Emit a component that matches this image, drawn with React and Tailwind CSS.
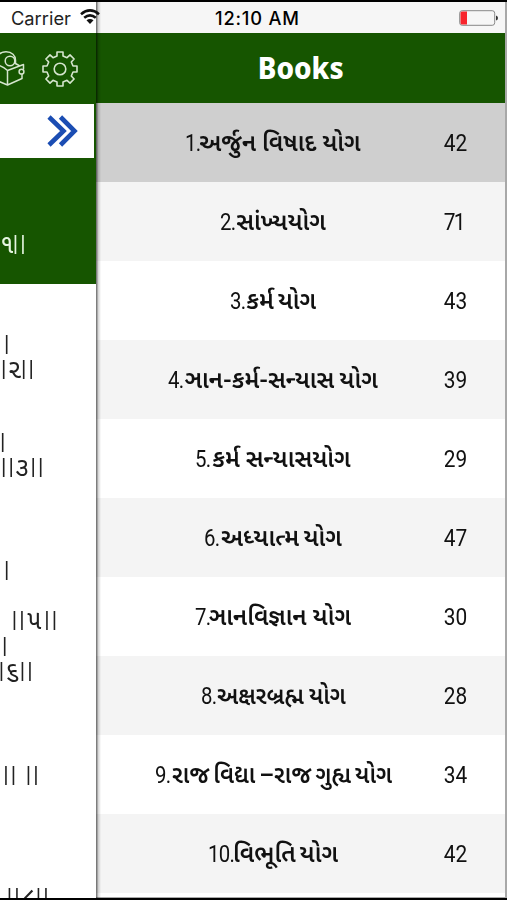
import React from 'react';

const books = [
    { no: '1', title: 'અર્જુન વિષાદ યોગ', verses: '42', bg: 'bg-[#cfcfcf]', noCls: 'w-[14px]', titleCls: '' },
    { no: '2', title: 'સાંખ્યયોગ', verses: '71', bg: 'bg-[#f4f4f4]', noCls: 'w-[16px]', titleCls: '' },
    { no: '3', title: 'કર્મ યોગ', verses: '43', bg: 'bg-white', noCls: 'w-[16.5px]', titleCls: '[word-spacing:-2px]' },
    { no: '4', title: 'ઞાન-કર્મ-સન્યાસ યોગ', verses: '39', bg: 'bg-[#f4f4f4]', noCls: 'w-[16.5px]', titleCls: '[word-spacing:-1px]' },
    { no: '5', title: 'કર્મ સન્યાસયોગ', verses: '29', bg: 'bg-white', noCls: 'w-[17px]', titleCls: '' },
    { no: '6', title: 'અધ્યાત્મ યોગ', verses: '47', bg: 'bg-[#f4f4f4]', noCls: 'w-[17px]', titleCls: '[word-spacing:-1.5px]' },
    { no: '7', title: 'ઞાનવિજ્ઞાન યોગ', verses: '30', bg: 'bg-white', noCls: 'w-[14px]', titleCls: '' },
    { no: '8', title: 'અક્ષરબ્રહ્મ યોગ', verses: '28', bg: 'bg-[#f4f4f4]', noCls: 'w-[16.5px]', titleCls: 'origin-left scale-x-[0.965] -mr-[5px] [word-spacing:-1px]' },
    { no: '9', title: 'રાજ વિદ્યા –રાજ ગુહ્ય યોગ', verses: '34', bg: 'bg-white', noCls: 'w-[16.5px]', titleCls: 'origin-left scale-x-[0.97] -mr-[8px] [word-spacing:-2px]' },
    { no: '10', title: 'વિભૂતિ યોગ', verses: '42', bg: 'bg-[#f4f4f4]', noCls: 'w-[25px]', titleCls: '[word-spacing:-2px]' },
];

function Bar() {
    return <span className="w-[7.5px] shrink-0 text-center">|</span>;
}

function Digit({ className, children }) {
    return <span className={`shrink-0 text-center text-[26px] ${className}`}>{children}</span>;
}

function Line({ className = '', children }) {
    return <p className={`flex h-[25.3px] items-center text-[22px] leading-none ${className}`}>{children}</p>;
}

function ReaderIcon() {
    return (
        <svg className="-ml-[11px] h-9 w-9 shrink-0" viewBox="0 0 36 36" fill="none" stroke="#d5e5cd" strokeWidth="1.5" strokeLinejoin="round" strokeLinecap="round">
            <path d="M8 13C6 5 11 .8 17 .8c6 0 9.500 3.700 9.500 8.500v3" />
            <circle cx="21" cy="10" r="4.800" />
            <path d="M18.500 19.500C14 15 9 13.500 3 13v14.500l15.500 6.500L33 27.500v-4M18.500 19.500V34M18.500 19.500L34.500 13.500v4.500M25.500 12l4.500 2.500" />
            <circle cx="32.500" cy="20.700" r="2.400" />
        </svg>
    );
}

function GearIcon() {
    return (
        <svg className="ml-[17px] h-9 w-9 shrink-0" viewBox="0 0 36 36" fill="none" stroke="#d5e5cd" strokeWidth="1.600" strokeLinejoin="round">
            <path d="M15 1h6v4l4 1.700 3-2.800 4.100 4.100-2.800 3 1.700 4h4v6h-4l-1.700 4 2.800 3-4.100 4.100-3-2.800-4 1.700v4h-6v-4l-4-1.700-3 2.800L3.900 28l2.800-3L5 21H1v-6h4l1.700-4L3.900 8 8 3.900l3 2.800L15 5z" />
            <circle cx="18" cy="18" r="5.800" />
        </svg>
    );
}

function Reader() {
    return (
        <div className="flex h-full w-24 shrink-0 flex-col overflow-hidden bg-white font-['Roboto','Noto_Sans_Gujarati',sans-serif] text-[#222]">
            <div className="flex h-[31px] shrink-0 items-center pl-[11px] pt-0.5">
                <span className="font-['Inter',sans-serif] text-[18.3px] leading-none text-[#222]">Carrier</span>
            </div>
            <div className="flex h-[71px] shrink-0 items-center bg-[#165500]">
                <ReaderIcon />
                <GearIcon />
            </div>
            <div className="h-[54px] shrink-0 bg-[#165500] pr-0.5">
                <div className="flex h-full items-center justify-end bg-white pr-4">
                    <svg className="h-8 w-[31px]" viewBox="0 0 31 32" fill="none" stroke="#1b4db3" strokeWidth="4.600">
                        <path d="M2 2l14.500 14L2 30M13.500 2L27.500 16l-14 14" />
                    </svg>
                </div>
            </div>
            <div className="flex h-[126px] shrink-0 flex-col bg-[#165500] pt-[73px] text-[#e5f5e0]">
                <div className="will-change-transform">
                    <Line>
                        <Digit className="w-[11.75px]">૧</Digit><Bar /><Bar />
                    </Line>
                </div>
            </div>
            <div className="pt-[47.5px] will-change-transform">
                <Line className="pl-[3px]"><Bar /></Line>
                <Line><Bar /><Digit className="w-[12.5px]">૨</Digit><Bar /><Bar /></Line>
                <Line />
                <Line />
                <Line className="-ml-px -mt-[3.5px]"><Bar /></Line>
                <Line><Bar /><Bar /><Digit className="w-[14.5px]">૩</Digit><Bar /><Bar /></Line>
                <Line />
                <Line />
                <Line />
                <Line className="mt-[1.5px] pl-[3px]"><Bar /></Line>
                <Line />
                <Line className="pl-[10.75px]"><Bar /><Bar /><Digit className="w-[17.5px]">૫</Digit><Bar /><Bar /></Line>
                <Line className="pl-px"><Bar /></Line>
                <Line className="-ml-[2.25px]"><Bar /><Digit className="w-[13.5px]">૬</Digit><Bar /><Bar /></Line>
                <Line />
                <Line />
                <Line />
                <Line className="mt-[2.5px] pl-[2.25px]"><Bar /><Bar /><Digit className="w-[7.5px]"> </Digit><Bar /><Bar /></Line>
                <Line />
                <Line />
                <Line />
                <Line />
                <Line className="-mt-[4px] pl-[5.75px]"><Bar /><Bar /><Digit className="w-[14px]">૮</Digit><Bar /><Bar /></Line>
            </div>
        </div>
    );
}

function BookRow({ book }) {
    return (
        <div className={`flex h-[79px] shrink-0 items-center pl-1.5 ${book.bg}`}>
            <div className="flex w-[341px] items-baseline justify-center whitespace-nowrap pl-px text-[24px] leading-none">
                <span className={`shrink-0 ${book.noCls}`}>
                    <span className="inline-block origin-left scale-x-[0.85] tracking-[-0.8px]">{book.no}.</span>
                </span>
                <span className={`font-semibold ${book.titleCls}`}>{book.title}</span>
            </div>
            <span className={`origin-left scale-x-[0.87] pl-px text-[24px] leading-none ${book.verses === '71' ? 'tracking-[-2px]' : ''}`}>{book.verses}</span>
        </div>
    );
}

function BooksDrawer() {
    return (
        <div className="flex h-full min-w-0 flex-1 flex-col border-r-2 border-b border-[#a8a8a8] bg-white font-['Roboto','Noto_Sans_Gujarati',sans-serif] text-[#111]">
            <div className="flex h-[31px] shrink-0 items-center bg-[#f6f6f6] pl-[119px] pr-[7px]">
                <span className="pt-0.5 font-['Inter',sans-serif] text-[18.3px] font-medium leading-none tracking-[0.8px] text-black">12:10 AM</span>
                <svg className="ml-auto h-4 w-[39px]" viewBox="0 0 39 16">
                    <rect x="0.7" y="0.7" width="35" height="14.600" rx="2.500" fill="none" stroke="#888" />
                    <path d="M1.500 3q0-1.500 1.500-1.500h5v13H3q-1.500 0-1.500-1.500z" fill="#f8242c" />
                    <path d="M37 5.500q2 .5 2 2.500t-2 2.500z" fill="#333" />
                </svg>
            </div>
            <div className="flex h-[70px] shrink-0 items-center justify-center bg-[#165500] pb-px">
                <h1 className="scale-x-[0.9] font-['Noto_Sans',sans-serif] text-[31px] font-extrabold leading-none text-white">Books</h1>
            </div>
            <div className="flex flex-col will-change-transform">
                {books.map((book) => (
                    <BookRow key={book.no} book={book} />
                ))}
            </div>
        </div>
    );
}

export default function App() {
    return (
        <div className="relative flex h-[900px] w-[507px] overflow-hidden border-t-2 border-b-2 border-black bg-white">
            <Reader />
            <BooksDrawer />
            {/* drawer edge shadow */}
            <div className="absolute inset-y-0 left-24 w-[5px] bg-linear-to-r from-black/60 via-black/15 to-transparent"></div>
            <svg className="absolute left-20 top-[7px] h-[15px] w-5" viewBox="0 0 20 15" fill="none" stroke="#111" strokeWidth="2.600">
                <path d="M1 5.200q9-7.500 18 0M4.200 8.700q5.800-4.800 11.600 0" />
                <path d="M6.500 11.300q3.500-2.400 7 0L10 15z" fill="#111" stroke="none" />
            </svg>
        </div>
    );
}
